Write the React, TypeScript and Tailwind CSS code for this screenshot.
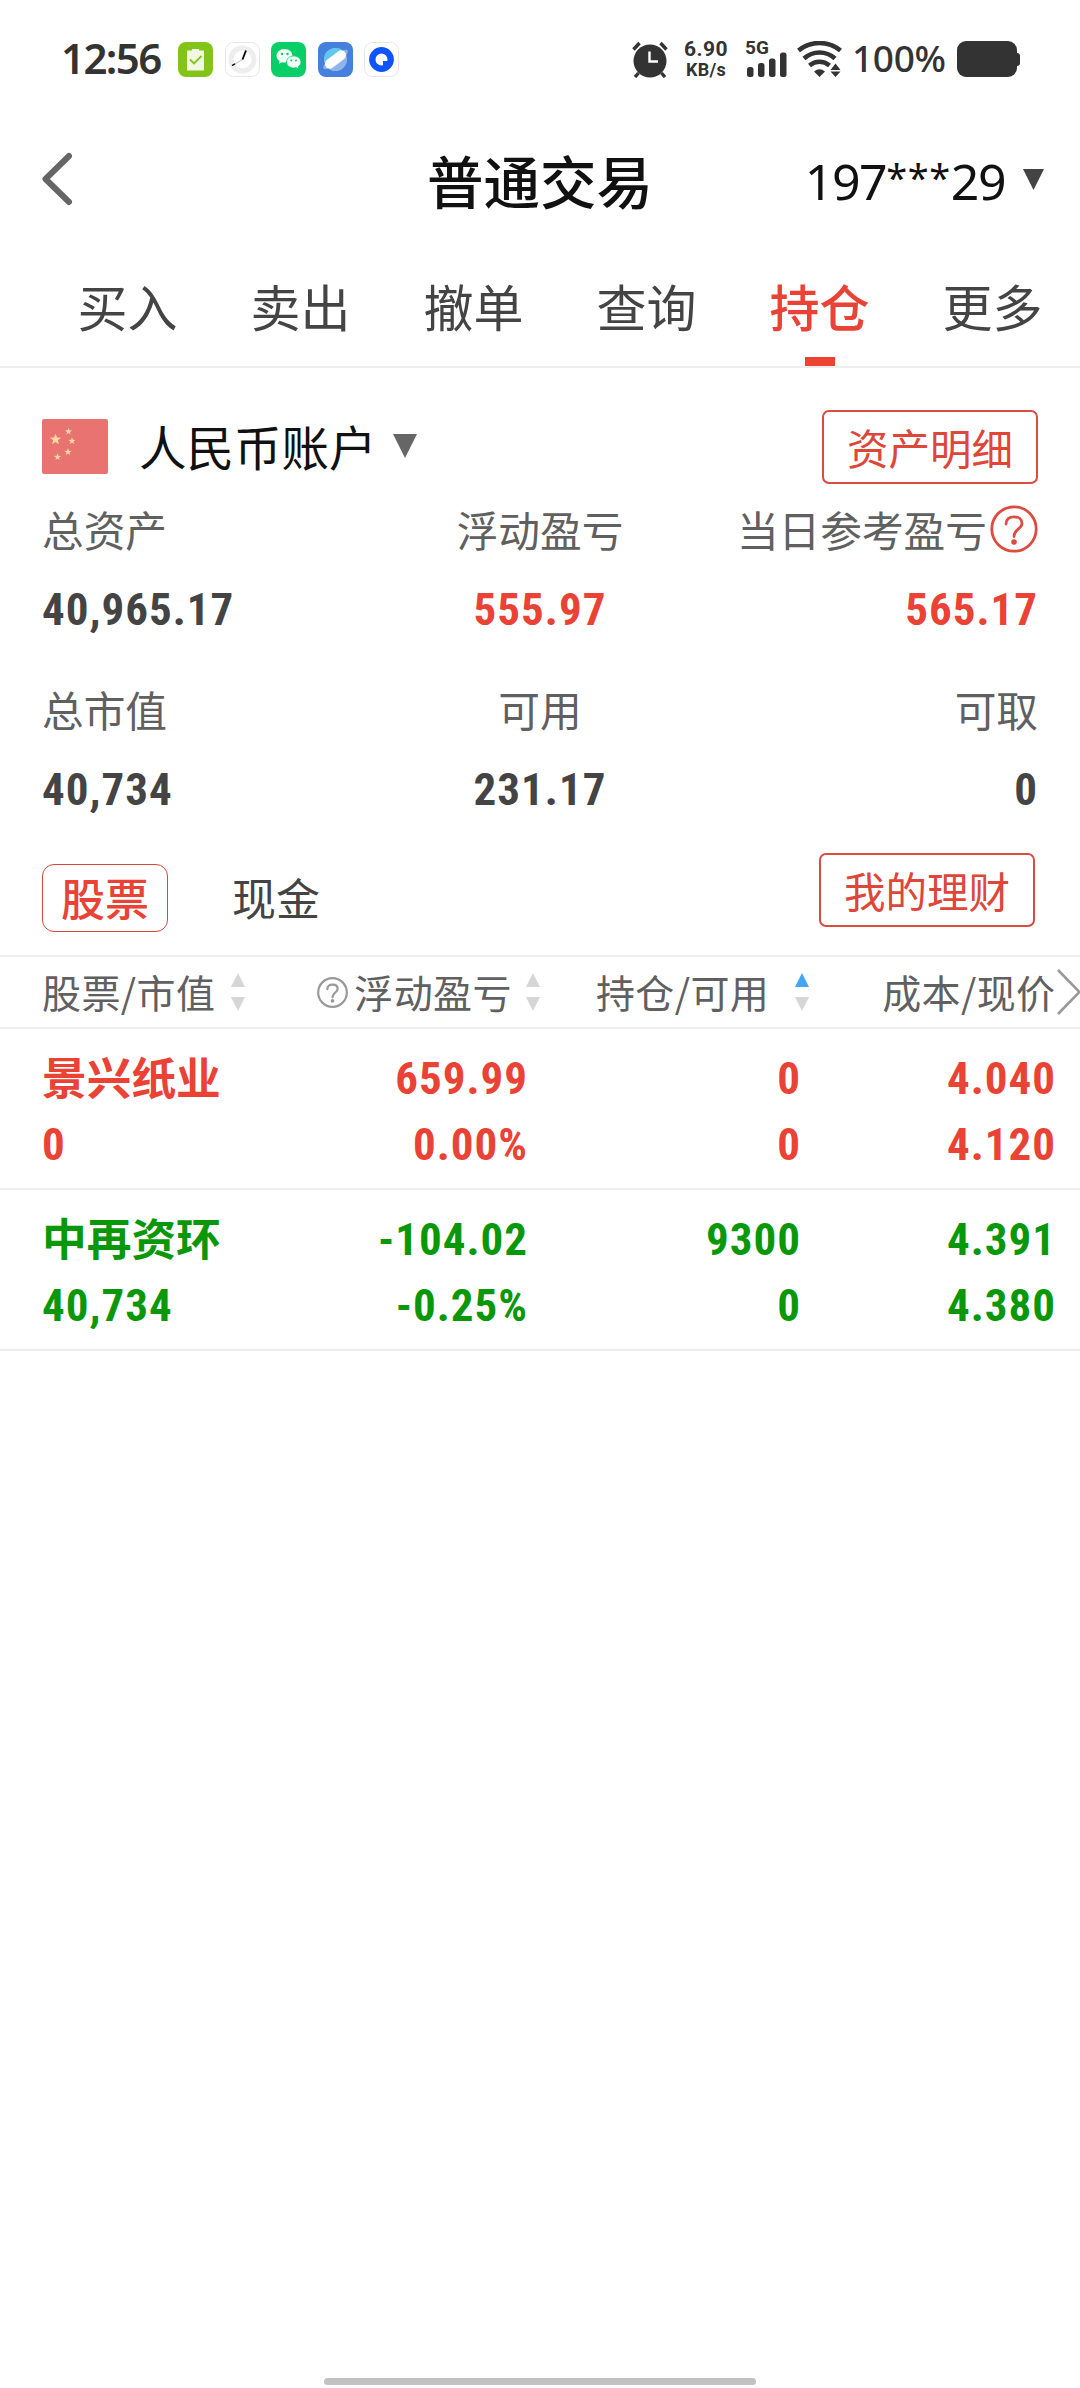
import * as React from "react"
import clsx from "clsx"

// ===== Shared bits =====

const NUM = "font-['Roboto',sans-serif] font-bold [font-stretch:87%] tracking-[1px]"

interface TriangleProps {
  size: number
  up?: boolean
  className?: string
}

function Triangle({ size, up = false, className }: TriangleProps) {
  return (
    <svg width={size} height={size} viewBox="0 0 10 10" className={clsx("shrink-0 fill-current", className)}>
      <path d={up ? "M5 0L10 10H0Z" : "M0 0H10L5 10Z"} />
    </svg>
  )
}

function HelpIcon({ size, stroke, className }: { size: number; stroke: number; className?: string }) {
  return (
    <svg width={size} height={size} viewBox="0 0 48 48" fill="none" stroke="currentColor" strokeWidth={stroke} className={clsx("shrink-0", className)}>
      <circle cx="24" cy="24" r="22.2" />
      <path d="M16 19C16 14.2 19.2 11.8 24 11.8S32 14.4 32 18.6C32 24 24 24 24 31.5" strokeLinecap="round" />
      <circle cx="24" cy="37" r="2.8" fill="currentColor" stroke="none" />
    </svg>
  )
}

// ===== Status bar =====

function AppIcons() {
  return (
    <div className="flex gap-[11.5px]">
      {/* Clipboard */}
      <svg width="35" height="35" viewBox="0 0 35 35">
        <rect width="35" height="35" rx="8" fill="#84c41a" />
        <path d="M9 8.5H14V7H21V8.5H26V28.5H9Z" fill="#f0f8e2" />
        <path d="M12 17.5L16 21.5L23.5 14" fill="none" stroke="#84c41a" strokeWidth="1.8" />
      </svg>
      {/* Clock */}
      <svg width="35" height="35" viewBox="0 0 35 35">
        <rect x=".5" y=".5" width="34" height="34" rx="8" fill="#fff" stroke="#e6e6e6" />
        <circle cx="17.5" cy="17.5" r="11.5" fill="none" stroke="#eee" strokeWidth="5" />
        <path d="M17.5 17.5L7 23.5" stroke="#bbb" strokeWidth="1" />
        <path d="M10 21.8L7 23.5" stroke="#000" strokeWidth="1.4" />
        <path d="M17.5 17.5L21 8.5" stroke="#000" strokeWidth="1.8" />
      </svg>
      {/* Chat */}
      <svg width="35" height="35" viewBox="0 0 35 35">
        <rect width="35" height="35" rx="8" fill="#07cf68" />
        <path d="M13.5 7C9 7 5.5 10 5.5 13.8C5.5 16 6.7 17.9 8.6 19.1L8 21.8L11 20.2C11.8 20.4 12.7 20.5 13.5 20.5C18 20.5 21.5 17.5 21.5 13.8C21.5 10 18 7 13.5 7Z" fill="#f2fff7" />
        <path d="M22.7 14C18.7 14 15.5 16.6 15.5 20S18.7 26 22.7 26C23.5 26 24.3 25.9 25 25.7L27.7 27L27.2 24.8C28.9 23.7 30 21.9 30 20C30 16.6 26.8 14 22.7 14Z" fill="#f2fff7" stroke="#07cf68" strokeWidth=".8" />
        <circle cx="11" cy="12" r="1.2" fill="#07cf68" />
        <circle cx="16.5" cy="12" r="1.2" fill="#07cf68" />
        <circle cx="20.3" cy="18.4" r="1" fill="#07cf68" />
        <circle cx="25" cy="18.4" r="1" fill="#07cf68" />
      </svg>
      {/* Browser */}
      <svg width="35" height="35" viewBox="0 0 35 35">
        <rect width="35" height="35" rx="8" fill="#4580dc" />
        <circle cx="17.5" cy="17.5" r="11.5" fill="#8fb4ea" />
        <path d="M6.2 19A11.5 11.5 0 0 1 25 8.8Z" fill="#5fc8f2" />
        <ellipse cx="17.5" cy="17.5" rx="15" ry="4.5" transform="rotate(-37 17.5 17.5)" fill="#8fb4ea" />
        <rect x="5.5" y="12.7" width="24" height="9.6" rx="4.8" transform="rotate(-37 17.5 17.5)" fill="#fff" />
      </svg>
      {/* Ring */}
      <svg width="35" height="35" viewBox="0 0 35 35">
        <rect x=".5" y=".5" width="34" height="34" rx="8" fill="#fff" stroke="#e6e6e6" />
        <circle cx="17.5" cy="17.5" r="9.2" fill="none" stroke="#0f55ff" strokeWidth="6.4" />
        <path d="M19 19H24V24H19Z" fill="#0f55ff" />
      </svg>
    </div>
  )
}

function StatusBar() {
  return (
    <div className="flex h-[118px] items-center pl-[61px] pr-[60px] text-[#333]">
      <span className="w-[117px] pb-[3px] font-['Noto_Sans',sans-serif] text-[42px] font-semibold tracking-[-1.6px]">12:56</span>
      <AppIcons />

      <div className="ml-auto flex items-center">
        {/* Alarm */}
        <svg width="36" height="37" viewBox="0 0 36 37" className="shrink-0">
          <circle cx="18" cy="20" r="16.5" fill="#333" />
          <path d="M1.5 8.5L7.5 2M34.5 8.5L28.5 2" stroke="#333" strokeWidth="3.4" />
          <path d="M6.5 32L3 36M29.5 32L33 36" stroke="#333" strokeWidth="3.4" />
          <path d="M17.5 10.5V20.5H26" fill="none" stroke="#fff" strokeWidth="2.4" />
        </svg>

        <div className="ml-[15px] flex w-[46px] flex-col items-center font-['Roboto',sans-serif] font-bold">
          <span className="text-[21px] leading-[21px] tracking-[.4px]">6.90</span>
          <span className="text-[18px] leading-[20px] tracking-[.3px]">KB/s</span>
        </div>

        <div className="relative ml-[17px] h-[36px] w-[42px]">
          <span className="absolute -left-px top-0 font-['Roboto',sans-serif] text-[19px] font-bold leading-[13px]">5G</span>
          <svg width="42" height="36" viewBox="0 0 42 36" fill="#333">
            <rect x="1" y="26" width="6.5" height="10" rx="2.5" />
            <rect x="12" y="22" width="6.5" height="14" rx="2.5" />
            <rect x="23" y="17.5" width="6.5" height="18.5" rx="2.5" />
            <rect x="34" y="11.5" width="6.5" height="24.5" rx="2.5" />
          </svg>
        </div>

        {/* Wifi with traffic arrows */}
        <svg width="46" height="36" viewBox="0 0 46 36" className="ml-[9px] shrink-0" fill="none" stroke="#333" strokeWidth="4.6">
          <path d="M1.5 9.5C14 -.5 31 -.5 43.5 9.5" />
          <path d="M7 17.5C16 9.5 29 9.5 38 17.5" />
          <path d="M12.5 24.5C18.5 19.5 26.5 19.5 32.5 24.5" />
          <path d="M17 30.5Q22.5 26 28 30.5L22.5 36Z" fill="#333" stroke="none" />
          <path d="M33.5 29L38.5 22.5L43.5 29ZM33.5 30.5H43.5L38.5 36Z" fill="#333" stroke="none" />
        </svg>

        <span className="ml-[9px] w-[98px] pb-[3px] font-['Noto_Sans',sans-serif] text-[37px] font-medium tracking-[-.3px]">100%</span>

        <div className="ml-[7px] h-[36px] w-[60px] rounded-[9px] bg-[#333]" />
        <div className="h-[13px] w-[3px] rounded-r-[3px] bg-[#333]" />
      </div>
    </div>
  )
}

// ===== Title row =====

function Header() {
  return (
    <div className="grid h-[122px] grid-cols-3 items-center px-[38px] text-[#111]">
      <svg width="32" height="54" viewBox="0 0 32 54" fill="none" stroke="#666" strokeWidth="6" strokeLinecap="round" strokeLinejoin="round" className="ml-[3px]">
        <path d="M28 4L4.5 27L28 50" />
      </svg>
      <h1 className="whitespace-nowrap text-center text-[56.5px] font-medium">普通交易</h1>
      <div className="-mr-[2px] flex items-center justify-end">
        <span className="pt-[5px] font-['Noto_Sans',sans-serif] text-[50px] tracking-[-1.5px]">
          197<span className="align-[8px] text-[38px] leading-none tracking-[.6px]">***</span>29
        </span>
        <Triangle size={21} className="ml-[18px] text-[#444]" />
      </div>
    </div>
  )
}

// ===== Tabs =====

const tabs = ["买入", "卖出", "撤单", "查询", "持仓", "更多"]

function Tabs({ active }: { active: string }) {
  return (
    <div className="flex h-[128px] border-b-2 border-[#eee] pl-[41px]">
      {tabs.map((tab) => (
        <div
          key={tab}
          className={clsx(
            "flex w-[173px] shrink-0 flex-col items-center text-[50px]",
            tab === active ? "font-medium text-[#ea4335]" : "text-[#444]"
          )}
        >
          <span className="h-[117px] leading-[130px]">{tab}</span>
          {tab === active && <i className="h-[9px] w-[30px] bg-[#ee4333]" />}
        </div>
      ))}
    </div>
  )
}

// ===== Account summary =====

const STAR = "M0 -5L1.2 -1.6L4.8 -1.5L1.9 .6L2.9 4L0 2L-2.9 4L-1.9 .6L-4.8 -1.5L-1.2 -1.6Z"

function Flag() {
  return (
    <svg width="66" height="55" viewBox="0 0 66 55" fill="#fbd9a5" className="mb-[2px] shrink-0">
      <rect width="66" height="55" rx="2" fill="#e97371" />
      <path d={STAR} transform="translate(13.5 20.5) scale(1.2)" />
      <path d={STAR} transform="translate(26.5 12.5) scale(.75)" />
      <path d={STAR} transform="translate(30 22) scale(.75)" />
      <path d={STAR} transform="translate(26 33) scale(.75)" />
      <path d={STAR} transform="translate(15.5 38) scale(.75)" />
    </svg>
  )
}

function OutlineButton({ children, className }: { children: React.ReactNode; className?: string }) {
  return (
    <button className={clsx("h-[74px] w-[216px] shrink-0 rounded-[7px] border-2 border-[#d94c41] text-[41.5px] leading-[68px] text-[#de4639]", className)}>
      {children}
    </button>
  )
}

interface StatProps {
  label: string
  value: string
  align: "start" | "center" | "end"
  highlight?: boolean
  help?: boolean
}

function Stat({ label, value, align, highlight, help }: StatProps) {
  return (
    <div
      className={clsx(
        "flex h-[180px] flex-col whitespace-nowrap",
        align === "start" && "items-start",
        align === "center" && "items-center",
        align === "end" && "items-end"
      )}
    >
      <div className="flex h-[60px] items-center text-[41.7px] text-[#606060]">
        {label}
        {help && <HelpIcon size={48} stroke={2.8} className="ml-[3px] text-[#de4b40]" />}
      </div>
      <div className={clsx(NUM, "mt-[21px] text-[45px] leading-[60px]", highlight ? "text-[#ea4335]" : "text-[#444]")}>
        {value}
      </div>
    </div>
  )
}

function AccountSummary() {
  return (
    <section className="px-[42px] pt-[42px]">
      <div className="flex h-[74px] items-center">
        <Flag />
        <span className="ml-[31px] pb-[2px] text-[47.5px] text-[#111]">人民币账户</span>
        <Triangle size={24} className="mb-[2px] ml-[16px] text-[#666]" />
        <OutlineButton className="ml-auto">资产明细</OutlineButton>
      </div>
      <div className="mt-[15px] grid h-[354px] grid-cols-3">
        <Stat label="总资产" value="40,965.17" align="start" />
        <Stat label="浮动盈亏" value="555.97" align="center" highlight />
        <Stat label="当日参考盈亏" value="565.17" align="end" highlight help />
        <Stat label="总市值" value="40,734" align="start" />
        <Stat label="可用" value="231.17" align="center" />
        <Stat label="可取" value="0" align="end" />
      </div>
    </section>
  )
}

// ===== Holdings =====

function SortArrows({ asc = false, className }: { asc?: boolean; className?: string }) {
  return (
    <span className={clsx("flex flex-col gap-[10px] text-[#d6d6d6]", className)}>
      <Triangle size={14} up className={asc ? "text-[#42a5f5]" : undefined} />
      <Triangle size={14} />
    </span>
  )
}

interface Holding {
  name: string
  marketValue: string
  profit: string
  profitRate: string
  position: string
  available: string
  cost: string
  price: string
  rising: boolean
}

const holdings: Holding[] = [
  { name: "景兴纸业", marketValue: "0", profit: "659.99", profitRate: "0.00%", position: "0", available: "0", cost: "4.040", price: "4.120", rising: true },
  { name: "中再资环", marketValue: "40,734", profit: "-104.02", profitRate: "-0.25%", position: "9300", available: "0", cost: "4.391", price: "4.380", rising: false },
]

function Cell({ top, bottom }: { top: string; bottom: string }) {
  return (
    <div className={clsx(NUM, "text-right text-[45px] leading-[66px]")}>
      <div>{top}</div>
      <div>{bottom}</div>
    </div>
  )
}

function HoldingRow({ item }: { item: Holding }) {
  return (
    <div
      className={clsx(
        "grid h-[161px] grid-cols-[240px_246px_273px_255px] border-b-2 border-[#eee] pl-[42px] pt-[17px]",
        item.rising ? "text-[#ea4335]" : "text-[#0a980a]"
      )}
    >
      <div>
        <div className="h-[66px] text-[44.7px] font-bold leading-[60px]">{item.name}</div>
        <div className={clsx(NUM, "text-[45px] leading-[66px]")}>{item.marketValue}</div>
      </div>
      <Cell top={item.profit} bottom={item.profitRate} />
      <Cell top={item.position} bottom={item.available} />
      <Cell top={item.cost} bottom={item.price} />
    </div>
  )
}

function Holdings() {
  return (
    <section>
      <div className="flex h-[102px] items-start pl-[42px] pr-[45px]">
        <span className="mt-[11px] h-[68px] w-[126px] rounded-[12px] border border-[#d4483d] text-center text-[44px] font-medium leading-[65px] text-[#ea4335]">
          股票
        </span>
        <span className="ml-[64px] mt-[11px] text-[44px] leading-[67px] text-[#444]">现金</span>
        <OutlineButton className="ml-auto">我的理财</OutlineButton>
      </div>

      {/* Column titles */}
      <div className="flex h-[74px] items-center whitespace-nowrap border-y-2 border-[#eee] pl-[42px] text-[39px] leading-[68px] tracking-[.4px] text-[#606060]">
        <span className="shrink-0 pb-[2px]">股票/市值</span>
        <SortArrows className="ml-[16px]" />
        <HelpIcon size={31} stroke={3.4} className="ml-[72px] text-[#999]" />
        <span className="ml-[6px] shrink-0 pb-[2px]">浮动盈亏</span>
        <SortArrows className="ml-[14px]" />
        <span className="ml-[56px] shrink-0 pb-[2px]">持仓/可用</span>
        <SortArrows asc className="ml-[26px]" />
        <span className="ml-[73px] shrink-0 pb-[2px]">成本/现价</span>
        <svg width="25" height="46" viewBox="0 0 25 46" fill="none" stroke="#999" strokeWidth="2.6" className="shrink-0">
          <path d="M2 1L23.5 23L2 45" />
        </svg>
      </div>

      {holdings.map((item) => (
        <HoldingRow key={item.name} item={item} />
      ))}
    </section>
  )
}

export default function App() {
  return (
    <div className="flex h-[2388px] w-[1080px] flex-col overflow-hidden bg-white font-['Noto_Sans_CJK_SC',sans-serif]">
      <StatusBar />
      <Header />
      <Tabs active="持仓" />
      <AccountSummary />
      <Holdings />
      <div className="mx-auto mb-[3px] mt-auto h-[7px] w-[432px] rounded-full bg-[#c2c2c2]" />
    </div>
  )
}
